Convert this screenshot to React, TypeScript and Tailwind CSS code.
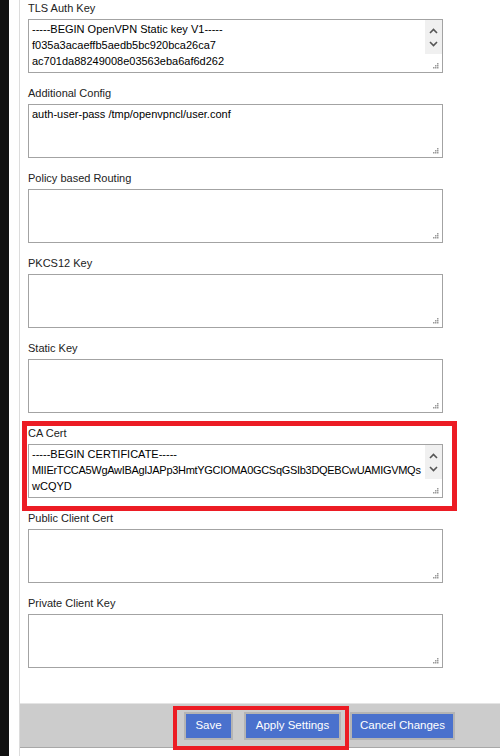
import type { ReactNode } from "react";

type Field = {
  label: string;
  lines?: string[];
  scroll?: boolean;
};

const fields: Field[] = [
  {
    label: "TLS Auth Key",
    lines: [
      "-----BEGIN OpenVPN Static key V1-----",
      "f035a3acaeffb5aedb5bc920bca26ca7",
      "ac701da88249008e03563eba6af6d262"
    ],
    scroll: true
  },
  { label: "Additional Config", lines: ["auth-user-pass /tmp/openvpncl/user.conf"] },
  { label: "Policy based Routing" },
  { label: "PKCS12 Key" },
  { label: "Static Key" },
  {
    label: "CA Cert",
    lines: [
      "-----BEGIN CERTIFICATE-----",
      "MIIErTCCA5WgAwIBAgIJAPp3HmtYGCIOMA0GCSqGSIb3DQEBCwUAMIGVMQs",
      "wCQYD"
    ],
    scroll: true
  },
  { label: "Public Client Cert" },
  { label: "Private Client Key" }
];

function Grip() {
  return (
    <svg width="7" height="7" viewBox="0 0 7 7" className="absolute bottom-[3px] right-[3px]">
      {[
        [5, 0],
        [3, 2],
        [5, 2],
        [1, 4],
        [3, 4],
        [5, 4]
      ].map(([x, y]) => (
        <rect key={`${x}-${y}`} x={x} y={y + 1} width="1.5" height="1.5" fill="#9a9a9a" />
      ))}
    </svg>
  );
}

function ScrollArrows() {
  return (
    <div className="absolute right-0 top-0 flex h-[34px] w-[17px] flex-col items-center justify-center gap-[7px] bg-[#f0f0f0]">
      <svg width="9" height="6" viewBox="0 0 9 6">
        <path d="M1 5 L4.5 1.5 L8 5" fill="none" stroke="#555" strokeWidth="1.6" />
      </svg>
      <svg width="9" height="6" viewBox="0 0 9 6">
        <path d="M1 1 L4.5 4.5 L8 1" fill="none" stroke="#555" strokeWidth="1.6" />
      </svg>
    </div>
  );
}

function TextBox({ field }: { field: Field }) {
  return (
    <div>
      <div className="h-4 leading-4 text-[11px] text-[#222]">{field.label}</div>
      <div className="relative mt-[3px] h-[54px] w-[415px] border border-[#a3a3a3] bg-white">
        <div className="overflow-hidden pl-[3px] pr-[18px] pt-[1px] text-[11px] leading-4 text-black">
          {(field.lines ?? []).map((line) => (
            <div key={line} className={line.length > 50 ? "whitespace-nowrap tracking-[-0.3px]" : "whitespace-nowrap"}>
              {line}
            </div>
          ))}
        </div>
        {field.scroll && <ScrollArrows />}
        <Grip />
      </div>
    </div>
  );
}

function Btn({ children, w }: { children: ReactNode; w: string }) {
  return (
    <button
      type="button"
      className={`h-[28px] shrink-0 border-2 border-[#b4b4b4] bg-[#4a71cd] text-[11.5px] text-white ${w}`}
    >
      {children}
    </button>
  );
}

export default function App() {
  return (
    <div
      className="flex h-[756px] w-[500px] overflow-hidden bg-white"
      style={{ fontFamily: '"Liberation Sans", Arial, sans-serif' }}
    >
      <div className="w-[9px] shrink-0 bg-[#111111]" />
      <div className="w-[10px] shrink-0 bg-white" />
      <div className="flex flex-1 flex-col border-l border-[#dcdcdc]">
        <div className="relative flex flex-col gap-3 pl-2">
          {fields.map((f) => (
            <TextBox key={f.label} field={f} />
          ))}
          {/* red highlight around CA Cert */}
          <div className="pointer-events-none absolute left-[2px] top-[421px] h-[90px] w-[435px] border-[5px] border-[#ec1c24]" />
        </div>
        <div className="relative mt-[35px] flex h-[45px] items-center border-b border-t border-b-[#a8a8a8] border-t-[#e4e4e4] bg-[#cccccc] pl-[164px]">
          <Btn w="w-[49px]">Save</Btn>
          <div className="w-[11px] shrink-0" />
          <Btn w="w-[97px]">Apply Settings</Btn>
          <div className="w-[9px] shrink-0" />
          <Btn w="w-[105px]">Cancel Changes</Btn>
          <div className="pointer-events-none absolute left-[153px] top-[2px] h-[44px] w-[176px] border-[4px] border-[#ec1c24]" />
        </div>
      </div>
    </div>
  );
}
